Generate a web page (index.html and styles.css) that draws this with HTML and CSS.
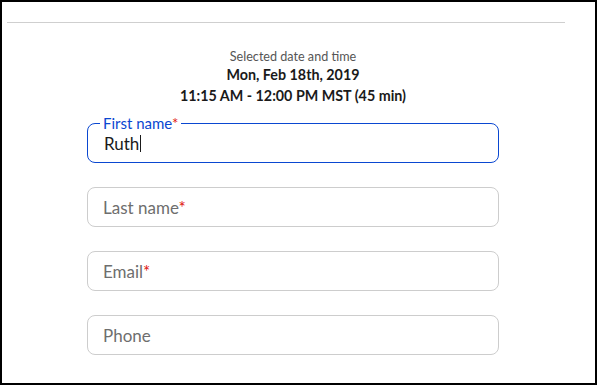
FILE: index.html
```html
<!DOCTYPE html>
<html>
<head>
<meta charset="utf-8">
<link rel="stylesheet" href="styles.css">
</head>
<body>
<div class="frame">
  <div class="rule"></div>
  <div class="content">
    <div class="summary">
      <div class="summary-label">Selected date and time</div>
      <div class="summary-date">Mon, Feb 18th, 2019</div>
      <div class="summary-time">11:15 AM - 12:00 PM MST (45 min)</div>
    </div>
    <div class="fields">
      <div class="field focused">
        <span class="float-label">First name<span class="req">*</span></span>
        <span class="value">Ruth</span><span class="caret"></span>
      </div>
      <div class="field">
        <span class="placeholder">Last name<span class="req">*</span></span>
      </div>
      <div class="field">
        <span class="placeholder">Email<span class="req">*</span></span>
      </div>
      <div class="field">
        <span class="placeholder">Phone</span>
      </div>
    </div>
  </div>
</div>
</body>
</html>
```
FILE: styles.css
```css
html, body {
  margin: 0;
  padding: 0;
  background: #fff;
}
body {
  font-family: Lato, "Noto Sans", sans-serif;
  color: #1a1a1a;
}
.frame {
  box-sizing: border-box;
  width: 597px;
  height: 385px;
  border: 2px solid #000;
  overflow: hidden;
}
.rule {
  margin: 20px 0 0 5px;
  width: 558px;
  border-top: 1px solid #cfcfcf;
}
.content {
  width: 412px;
  margin-left: 85px;
}
.summary {
  margin-top: 26px;
  text-align: center;
}
.summary-label {
  font-size: 12.6px;
  line-height: 16px;
  color: #555;
}
.summary-date {
  font-size: 14.3px;
  font-weight: 700;
  line-height: 20px;
  color: #1a1a1a;
}
.summary-time {
  font-size: 14.3px;
  font-weight: 700;
  line-height: 21px;
  color: #1a1a1a;
}
.fields {
  margin-top: 17px;
  display: flex;
  flex-direction: column;
  gap: 24px;
}
.field {
  position: relative;
  box-sizing: border-box;
  height: 40px;
  border: 1px solid #cdcdcd;
  border-radius: 8px;
  display: flex;
  align-items: center;
  padding-left: 15px;
  font-size: 17px;
}
.field.focused {
  border-color: #0a47d1;
  padding-left: 16px;
}
.placeholder {
  color: #6e6e6e;
}
.value {
  color: #1a1a1a;
}
.caret {
  display: inline-block;
  width: 1px;
  height: 17px;
  background: #1a1a1a;
  margin-left: 1px;
}
.req {
  color: #e0140f;
}
.float-label {
  position: absolute;
  top: -10px;
  left: 12px;
  padding: 0 3px;
  background: #fff;
  font-size: 15px;
  line-height: 18px;
  color: #0a47d1;
}
```
